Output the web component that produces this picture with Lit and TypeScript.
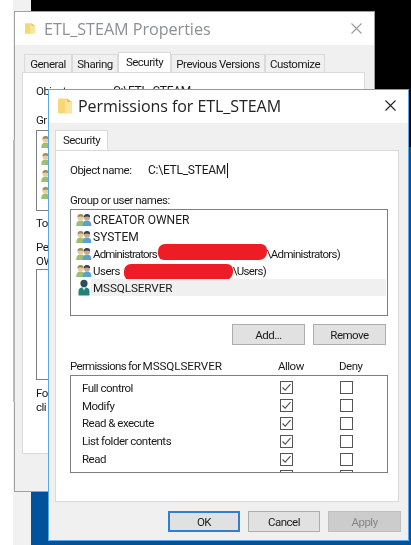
import { LitElement, html, css, svg } from "lit";
import { customElement } from "lit/decorators.js";

const folder = (w: number, h: number) => html`<svg class="folder" width=${w} height=${h} viewBox="0 0 14 16">
  <path d="M0 1.5 Q0 .5 1 .5 H9 V15.5 H1 Q0 15.5 0 14.5Z" fill="#f7d774"/>
  <path d="M9 .5 L14 4 V15 Q14 15.5 13 15.5 H7 V3 Z" fill="#fbe49c"/>
  <path d="M9 .5 V4 H14Z" fill="#e8c25e"/>
</svg>`;

const person = (cx: number, hair: string, face: string, body: string) => svg`
  <path d="M${cx - 4.4} 13 Q${cx - 4.4} 7.6 ${cx} 7.6 Q${cx + 4.4} 7.6 ${cx + 4.4} 13Z" fill=${body}/>
  <circle cx=${cx} cy="4.4" r="3.1" fill=${face}/>
  <path d="M${cx - 3.1} 4.2 A3.1 3.1 0 0 1 ${cx + 3.1} 4.2 Q${cx} 2.6 ${cx - 3.1} 4.2Z" fill=${hair}/>`;

const users = html`<svg class="ico" width="16" height="14" viewBox="0 0 16 14">
  ${person(4.6, "#a08a58", "#e8cda4", "#9cbf74")}
  ${person(11, "#30404f", "#c9a98c", "#5d9fd0")}
</svg>`;

const service = html`<svg class="ico" width="16" height="17" viewBox="0 0 16 17">
  <circle cx="8" cy="4.4" r="3.6" fill="#2f4e5c"/>
  <path d="M2.5 16.5 V12 Q2.5 8.2 8 8.2 Q13.5 8.2 13.5 12 V16.5Z" fill="#1f8378"/>
  <path d="M6 8.2 L8 11.5 L10 8.2Z" fill="#cfe3df"/>
</svg>`;

const chev = (up: boolean) => html`<svg width="9" height="6" viewBox="0 0 9 6">
  <path d=${up ? "M1 5 L4.5 1.5 L8 5" : "M1 1 L4.5 4.5 L8 1"} fill="none" stroke="#333" stroke-width="1.5"/>
</svg>`;

const check = html`<svg width="13" height="13" viewBox="0 0 13 13">
  <rect x=".5" y=".5" width="12" height="12" fill="#fff" stroke="#555"/>
  <path d="M2.5 6.5 L5.2 9.2 L10.5 3.2" fill="none" stroke="#555" stroke-width="1.2"/>
</svg>`;
const box = html`<svg width="13" height="13" viewBox="0 0 13 13">
  <rect x=".5" y=".5" width="12" height="12" fill="#fff" stroke="#555"/>
</svg>`;

const perms = ["Full control", "Modify", "Read & execute", "List folder contents", "Read"];

@customElement("app-root")
export class AppRoot extends LitElement {
  static styles = css`
    :host {
      display: block;
      width: 411px;
      height: 545px;
      font-family: Roboto, "Open Sans", sans-serif;
      font-size: 11.5px;
      letter-spacing: -0.5px;
      color: #1a1a1a;
    }
    .caps { letter-spacing: 0; font-size: 12px; }
    .path { letter-spacing: -0.25px; font-size: 12px; }
    .tight { letter-spacing: -0.85px; }
    .snug { letter-spacing: -0.7px; }
    .caps-s { letter-spacing: -0.1px; font-size: 11.7px; }
    .desk {
      position: relative;
      width: 411px;
      height: 545px;
      overflow: hidden;
      background: #fff;
      filter: blur(0.3px);
    }
    .strip { position: absolute; left: 13px; top: 0; width: 18px; height: 545px; background: #f1f1f1; }
    .black { position: absolute; left: 31px; top: 0; right: 0; height: 147px; background: #000; }
    .blue { position: absolute; left: 31px; top: 147px; right: 0; bottom: 0; background: #00529c; }
    .edge { position: absolute; left: 13px; top: 140px; width: 2px; height: 262px; background: #b9b9b9; }

    .win { position: absolute; box-sizing: border-box; display: flex; flex-direction: column; background: #f0f0f0; }
    .back { left: 14px; top: 11px; width: 361px; height: 481px; border: 1px solid #a0a0a0; }
    .front { left: 48px; top: 89px; width: 361px; height: 452px; border: 1px solid #5aa8e8; }

    .title {
      display: flex; align-items: center; background: #fff; flex: none; height: 33px; box-sizing: border-box;
      font-family: "Open Sans", sans-serif; letter-spacing: -0.05px;
    }
    .back .title { padding: 0 12px 0 10px; color: #8b8f96; font-size: 16.2px; gap: 9px; }
    .front .title { padding: 0 12px 2px 9px; color: #222; font-size: 16px; gap: 6px; letter-spacing: -0.05px; }
    .title span { flex: 1; }

    .tabs { flex: none; height: 20px; display: grid; align-items: end; justify-items: stretch; }
    .back .tabs { padding: 7px 0 0 9px; grid-template-columns: 48px 46px 53px 94px 60px; }
    .front .tabs { padding: 7px 0 0 6px; grid-template-columns: 53px; }
    .tab {
      box-sizing: border-box; height: 18px; display: flex; align-items: center; justify-content: center;
      border: 1px solid #dadada; border-bottom: none; background: #f0f0f0;
    }
    .tab.on { height: 20px; background: #fff; padding-bottom: 2px; }

    .page { box-sizing: border-box; background: #fff; border: 1px solid #dadada; }
    .back .page { margin: 0 9px 0 7px; height: 382px; padding: 10px 13px; }
    .front .page { margin: 0 9px 0 6px; height: 352px; padding: 11px 10px 0 14px; display: flex; flex-direction: column; }

    .obj { display: flex; height: 16px; align-items: center; white-space: nowrap; }
    .back .obj .lab { width: 77px; }
    .front .obj .lab { width: 78px; }
    .caret { display: inline-block; width: 1px; height: 15px; background: #111; margin-left: 1px; }

    .label { height: 16px; display: flex; align-items: center; white-space: nowrap; }
    .label.t { height: 14px; }
    .names { margin-top: 14px; }
    .back .names { margin-top: 13px; }
    .list { box-sizing: border-box; border: 1px solid #7f7f7f; background: #fff; height: 107px; margin-top: 1px; padding: 1px 1px 0 5px; }
    .row { display: flex; align-items: center; height: 17px; }
    .row .ico { flex: none; }
    .row .txt { display: flex; align-items: center; flex: 1; height: 100%; padding-left: 1px; white-space: nowrap; }
    .row.sel .txt { background: #f0f0f0; margin-left: -1px; padding-left: 2px; }
    .redact { display: inline-block; height: 16px; width: 109px; background: #ee1c25; border-radius: 7px 6px 8px 6px; flex: none; }
    .redact.a { margin: -4px 0 0 1px; }
    .redact.u { margin: 2px 0 0 4px; }

    .btns { display: flex; justify-content: flex-end; gap: 8px; margin-top: 8px; padding-right: 2px; }
    .btn {
      box-sizing: border-box; width: 73px; height: 21px; display: flex; align-items: center; justify-content: center;
      background: #e1e1e1; border: 1px solid #adadad;
    }
    .btn.def { border: 2px solid #2f80cf; width: 72px; }
    .btn.mid { width: 72px; }
    .btn.off { background: #ccc; border-color: #bfbfbf; color: #858585; }

    .phead { display: flex; height: 16px; align-items: center; margin-top: 13px; white-space: nowrap; }
    .phead .l { width: 208px; }
    .phead .a { width: 61px; }
    .pbox { box-sizing: border-box; border: 1px solid #7f7f7f; height: 98px; margin-top: 1px; display: flex; overflow: hidden; }
    .prows { flex: 1; padding: 3px 0 0 11px; }
    .prow { display: flex; align-items: center; height: 17.8px; }
    .prow .n { width: 198px; }
    .prow .c { width: 59.5px; display: flex; }
    .sb { width: 15px; margin-right: 1px; flex: none; background: #f0f0f0; display: flex; flex-direction: column; justify-content: space-between; }
    .sb .arrow { height: 17px; display: flex; align-items: center; justify-content: center; }
    .sb .thumb { height: 46px; background: #cdcdcd; margin-bottom: auto; }

    .foot { display: flex; justify-content: flex-end; gap: 8px; padding: 9px 7px 0 0; }
    .inner { box-sizing: border-box; border: 1px solid #7f7f7f; }
    .g { height: 81px; margin-top: 2px; padding: 2px 0 0 4px; }
    .to { margin-top: 4px; }
    .pe { margin-top: 9px; }
    .own { height: 111px; margin-top: 1px; }
    .fo { margin-top: 6px; }
    .folder, .x { flex: none; }
  `;

  private close(color: string) {
    return html`<svg class="x" width="11" height="11" viewBox="0 0 11 11"><path d="M.5 .5 L10.5 10.5 M10.5 .5 L.5 10.5" stroke=${color} stroke-width="1.1"/></svg>`;
  }

  render() {
    return html`<div class="desk">
      <div class="strip"></div>
      <div class="black"></div>
      <div class="blue"></div>

      <div class="win back">
        <div class="title">${folder(10, 13)}<span>ETL_STEAM Properties</span>${this.close("#9a9a9a")}</div>
        <div class="tabs">
          <div class="tab">General</div>
          <div class="tab">Sharing</div>
          <div class="tab on">Security</div>
          <div class="tab">Previous Versions</div>
          <div class="tab">Customize</div>
        </div>
        <div class="page">
          <div class="obj"><div class="lab">Object name:</div><div class="path">C:\\ETL_STEAM</div></div>
          <div class="label names">Gr</div>
          <div class="inner g">
            ${[0, 1, 2, 3].map(() => html`<div class="row">${users}</div>`)}
          </div>
          <div class="label to">To</div>
          <div class="label t pe">Pe</div>
          <div class="label t">OW</div>
          <div class="inner own"></div>
          <div class="label t fo">Fo</div>
          <div class="label t">cli</div>
        </div>
      </div>
      <div class="edge"></div>

      <div class="win front">
        <div class="title">${folder(14, 16)}<span>Permissions for ETL_STEAM</span>${this.close("#222")}</div>
        <div class="tabs"><div class="tab on">Security</div></div>
        <div class="page">
          <div class="obj"><div class="lab">Object name:</div><div class="path">C:\\ETL_STEAM</div><i class="caret"></i></div>
          <div class="label names">Group or user names:</div>
          <div class="list">
            <div class="row">${users}<div class="txt caps">CREATOR OWNER</div></div>
            <div class="row">${users}<div class="txt caps">SYSTEM</div></div>
            <div class="row">${users}<div class="txt"><span class="tight">Administrators</span><i class="redact a"></i><span class="snug">\\Administrators)</span></div></div>
            <div class="row">${users}<div class="txt"><span>Users</span><i class="redact u"></i><span class="snug">\\Users)</span></div></div>
            <div class="row sel">${service}<div class="txt caps-s">MSSQLSERVER</div></div>
          </div>
          <div class="btns"><div class="btn">Add...</div><div class="btn">Remove</div></div>
          <div class="phead"><div class="l"><span class="snug">Permissions for </span><span class="caps-s">MSSQLSERVER</span></div><div class="a">Allow</div><div>Deny</div></div>
          <div class="pbox">
            <div class="prows">
              ${perms.map((p) => html`<div class="prow"><div class="n">${p}</div><div class="c">${check}</div><div class="c">${box}</div></div>`)}
              <div class="prow"><div class="n"></div><div class="c">${box}</div><div class="c">${box}</div></div>
            </div>
            <div class="sb">
              <div class="arrow">${chev(true)}</div>
              <div class="thumb"></div>
              <div class="arrow">${chev(false)}</div>
            </div>
          </div>
        </div>
        <div class="foot">
          <div class="btn def">OK</div>
          <div class="btn mid">Cancel</div>
          <div class="btn off">Apply</div>
        </div>
      </div>
    </div>`;
  }
}
